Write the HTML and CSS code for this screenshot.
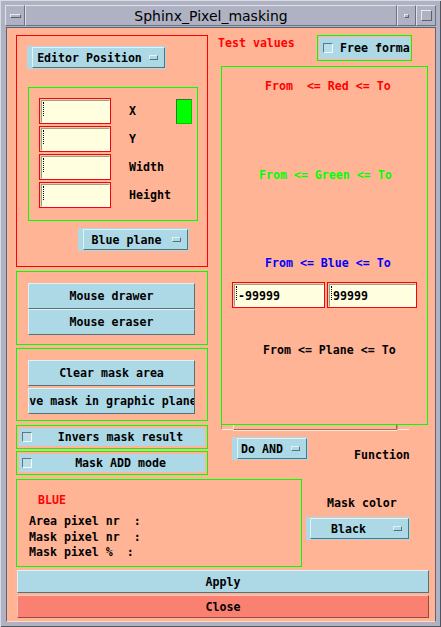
FILE: index.html
```html
<!DOCTYPE html>
<html>
<head>
<meta charset="utf-8">
<title>Sphinx_Pixel_masking</title>
<link rel="stylesheet" href="styles.css">
</head>
<body>
<div class="window">
  <div class="titlebar">
    <div class="tb-seg tb-menu"><span class="tb-menu-bar"></span></div>
    <div class="tb-seg tb-title">Sphinx_Pixel_masking</div>
    <div class="tb-seg tb-min"><span class="tb-min-dot"></span></div>
    <div class="tb-seg tb-max"><span class="tb-max-box"></span></div>
  </div>
  <div class="client">
    <div class="main">
      <div class="col-left">
        <div class="box-red editor">
          <div class="optmenu om-editor">
            <div class="om-btn"><span class="om-label">Editor Position</span><span class="om-ind"></span></div>
          </div>
          <div class="box-green posbox">
            <div class="posgrid">
              <div class="field"><div class="field-in"><span class="cursor"></span></div></div>
              <div class="poslabel">X</div>
              <div class="greensq"></div>
              <div class="field"><div class="field-in"><span class="cursor"></span></div></div>
              <div class="poslabel">Y</div>
              <div></div>
              <div class="field"><div class="field-in"><span class="cursor"></span></div></div>
              <div class="poslabel">Width</div>
              <div></div>
              <div class="field"><div class="field-in"><span class="cursor"></span></div></div>
              <div class="poslabel">Height</div>
              <div></div>
            </div>
          </div>
          <div class="optmenu om-plane">
            <div class="om-btn"><span class="om-label">Blue plane</span><span class="om-ind"></span></div>
          </div>
        </div>
        <div class="box-green draw-box">
          <div class="pbtn">Mouse drawer</div>
          <div class="pbtn">Mouse eraser</div>
        </div>
        <div class="box-green clear-box">
          <div class="pbtn">Clear mask area</div>
          <div class="pbtn pbtn-save">Save mask in graphic plane</div>
        </div>
        <div class="box-green toggle-box invers">
          <div class="toggle"><span class="check"></span><span class="toggle-label">Invers mask result</span></div>
        </div>
        <div class="box-green toggle-box maskadd">
          <div class="toggle"><span class="check"></span><span class="toggle-label">Mask ADD mode</span></div>
        </div>
      </div>
      <div class="col-right">
        <div class="rtop">
          <div class="test-values">Test values</div>
          <div class="box-green free-box">
            <div class="free"><span class="check"></span><span class="free-label">Free format</span></div>
          </div>
        </div>
        <div class="box-green bigbox">
          <div class="rng rng-red">From  &lt;= Red &lt;= To</div>
          <div class="rng rng-green">From &lt;= Green &lt;= To</div>
          <div class="rng rng-blue">From &lt;= Blue &lt;= To</div>
          <div class="rng-fields">
            <div class="field field-from"><div class="field-in"><span class="cursor"></span>-99999</div></div>
            <div class="field field-to"><div class="field-in"><span class="cursor"></span>99999</div></div>
          </div>
          <div class="rng rng-plane">From &lt;= Plane &lt;= To</div>
        </div>
        <div class="scrollstrip"><span class="sb-arrow"></span><span class="sb-trough"></span><span class="sb-arrow"></span></div>
        <div class="fn-row">
          <div class="optmenu om-and">
            <div class="om-btn"><span class="om-label">Do AND</span><span class="om-ind"></span></div>
          </div>
          <div class="fn-label">Function</div>
        </div>
      </div>
    </div>
    <div class="rowb">
      <div class="box-green info">
        <div class="info-blue">BLUE</div>
        <div class="info-lines">
          <div class="info-line">Area pixel nr  :</div>
          <div class="info-line">Mask pixel nr  :</div>
          <div class="info-line">Mask pixel %  :</div>
        </div>
      </div>
      <div class="maskcol">
        <div class="maskcol-label">Mask color</div>
        <div class="optmenu om-black">
          <div class="om-btn"><span class="om-label">Black</span><span class="om-ind"></span></div>
        </div>
      </div>
    </div>
    <div class="actions">
      <div class="abtn apply">Apply</div>
      <div class="abtn close">Close</div>
    </div>
  </div>
</div>
</body>
</html>
```
FILE: styles.css
```css
* { box-sizing: border-box; }
html, body { margin: 0; padding: 0; }
body {
  background: #aeb2c3;
  font-family: "DejaVu Sans Mono", "Liberation Mono", monospace;
  font-weight: bold;
  font-size: 11.6px;
  line-height: 14px;
  color: #000;
}
.window {
  width: 441px;
  height: 627px;
  background: #aeb2c3;
  padding: 5px;
  display: flex;
  flex-direction: column;
  box-shadow: inset 1px 1px 0 #d9dbe4, inset -1px -1px 0 #50545f;
}
.titlebar { display: flex; height: 21px; flex: none; }
.tb-seg {
  border: 1px solid;
  border-color: #dfe1e9 #6c7082 #6c7082 #dfe1e9;
  display: flex;
  align-items: center;
  justify-content: center;
}
.tb-menu { width: 20px; }
.tb-title {
  flex: 1;
  font-family: "DejaVu Sans", sans-serif;
  font-weight: normal;
  font-size: 14px;
  padding-top: 1px;
}
.tb-min { width: 19px; }
.tb-max { width: 20px; }
.tb-menu-bar {
  width: 11px; height: 4px;
  border: 1px solid;
  border-color: #e8eaf0 #5c6070 #5c6070 #e8eaf0;
}
.tb-min-dot {
  width: 5px; height: 4px;
  border: 1px solid;
  border-color: #e8eaf0 #5c6070 #5c6070 #e8eaf0;
}
.tb-max-box {
  width: 11px; height: 11px;
  border: 1px solid;
  border-color: #e8eaf0 #5c6070 #5c6070 #e8eaf0;
}
.client {
  margin: 1px 0 0 1px;
  flex: 1;
  border: 1px solid;
  border-color: #5e6272 #5e6272 #ffd9c9 #5e6272;
  background: #ffb496;
  padding: 7px 0 0 9px;
}
.main {
  display: grid;
  grid-template-columns: 192px 211px;
  column-gap: 10px;
}
.col-left, .col-right { display: flex; flex-direction: column; }

.box-red { border: 1px solid #ff0000; }
.box-green { border: 1px solid #00ff00; }

/* option menus */
.optmenu {
  background: #add8e6;
  height: 23px;
  padding: 1px 1px 1px 5px;
}
.om-btn {
  height: 100%;
  border: 1px solid;
  border-color: #e2f1f6 #55717a #55717a #e2f1f6;
  display: flex;
  align-items: center;
  padding: 0 6px 0 4px;
}
.om-label { text-align: center; white-space: pre; }
.om-ind {
  margin-left: auto;
  width: 9px; height: 5px;
  border: 1px solid;
  border-color: #e2f1f6 #55717a #55717a #e2f1f6;
}
.om-editor { width: 139px; }
.om-editor .om-label { width: 105px; }
.om-plane { width: 111px; margin: 7px 0 0 51px; }
.om-plane .om-label { width: 77px; }
.om-and { width: 76px; margin-left: 14px; }
.om-and .om-btn { padding-left: 3px; }
.om-and .om-label { width: 42px; }
.om-black { width: 104px; margin: 7px 0 0 4px; padding-left: 4px; }
.om-black .om-btn { padding-left: 6px; }
.om-black .om-label { width: 63px; }

/* editor position */
.editor { height: 232px; padding: 10px 0 0 10px; }
.posbox { width: 170px; height: 134px; margin: 18px 0 0 1px; padding: 10px 0 0 10px; }
.posgrid {
  display: grid;
  grid-template-columns: 72px 65px 16px;
  grid-auto-rows: 26px;
  row-gap: 2px;
}
.poslabel { padding-left: 18px; display: flex; align-items: center; }
.greensq {
  margin-top: 1px;
  height: 25px;
  background: #00ff00;
  border: 1px solid;
  border-color: #2a7a2a #00c800 #00c800 #2a7a2a;
}

/* text fields */
.field {
  border: 1px solid #ff0000;
  background: #dcd4b6;
  padding: 1px 0 0 1px;
  height: 26px;
}
.field-in {
  height: 100%;
  background: #ffffe0;
  border: 1px solid;
  border-color: #9e9c86 #fffff6 #fffff6 #9e9c86;
  display: flex;
  align-items: center;
  white-space: pre;
}
.cursor {
  align-self: flex-start;
  width: 2px;
  height: 14px;
  margin: 1px 0 0 1px;
  border-left: 1px dotted #000;
}

/* push buttons */
.pbtn {
  width: 167px;
  height: 26px;
  background: #add8e6;
  border: 1px solid;
  border-color: #e2f1f6 #55717a #55717a #e2f1f6;
  display: flex;
  align-items: center;
  justify-content: center;
  white-space: nowrap;
  overflow: hidden;
}
.pbtn-save { padding-right: 11px; }
.draw-box { height: 74px; margin-top: 4px; padding: 11px 0 0 11px; }
.clear-box { height: 73px; margin-top: 3px; padding: 11px 0 0 11px; }
.clear-box .pbtn + .pbtn { margin-top: 2px; }

/* toggles */
.toggle-box { height: 24px; padding: 2px; }
.invers { margin-top: 4px; }
.maskadd { margin-top: 2px; }
.toggle {
  height: 100%;
  background: #add8e6;
  display: flex;
  align-items: center;
}
.check {
  flex: none;
  width: 10px; height: 10px;
  border: 1px solid;
  border-color: #5d7880 #f4fafc #f4fafc #5d7880;
  background: #b9dde9;
}
.toggle .check { margin-left: 3px; }
.toggle-label { flex: 1; text-align: center; padding-left: 4px; white-space: pre; }

/* right column */
.rtop { display: flex; height: 26px; }
.test-values { color: #ff0000; margin-top: 1px; }
.free-box { margin: 0 17px 0 auto; width: 95px; height: 26px; padding: 1px; }
.free {
  height: 100%;
  background: #add8e6;
  display: flex;
  align-items: center;
  overflow: hidden;
  white-space: nowrap;
}
.free .check { margin-left: 4px; }
.free-label { margin-left: 7px; }

.bigbox { margin: 5px 0 0 3px; width: 207px; height: 359px; padding-top: 12px; }
.rng { white-space: pre; line-height: 14px; }
.rng-red { color: #ff0000; margin-left: 43px; }
.rng-green { color: #00ff00; margin: 75px 0 0 37px; }
.rng-blue { color: #0000ff; margin: 74px 0 0 43px; }
.rng-fields { display: flex; gap: 2px; margin: 12px 0 0 10px; }
.field-from { width: 93px; }
.field-to { width: 90px; }
.rng-plane { margin: 35px 0 0 41px; }

.scrollstrip { display: flex; margin-left: 3px; width: 188px; height: 5px; }
.sb-arrow {
  width: 12px;
  border-left: 1px solid #c98a76;
  border-bottom: 1px solid #fff0ea;
}
.sb-trough {
  flex: 1;
  border-left: 1px solid #ffe8de;
  border-right: 1px solid #a86a58;
  border-bottom: 1px solid #a86a58;
  box-shadow: 0 1px 0 #ffe8de;
}
.fn-row { display: flex; margin-top: 7px; }
.fn-label { margin: 11px 0 0 46px; }

/* info row */
.rowb { display: flex; margin-top: 4px; }
.info { width: 286px; height: 88px; padding: 13px 0 0 12px; }
.info-blue { color: #ff0000; margin-left: 9px; }
.info-lines { margin-top: 7px; }
.info-line { line-height: 15.67px; white-space: pre; }
.maskcol { display: flex; flex-direction: column; align-items: flex-start; }
.maskcol-label { margin: 17px 0 0 25px; }

/* action buttons */
.actions { margin: 3px 0 0 1px; width: 412px; }
.abtn {
  height: 23px;
  border: 1px solid;
  display: flex;
  align-items: center;
  justify-content: center;
}
.apply {
  background: #add8e6;
  border-color: #e2f1f6 #55717a #55717a #e2f1f6;
}
.close {
  margin-top: 2px;
  background: #fa8072;
  border-color: #fdc3bb #9c4a40 #9c4a40 #fdc3bb;
}
```
